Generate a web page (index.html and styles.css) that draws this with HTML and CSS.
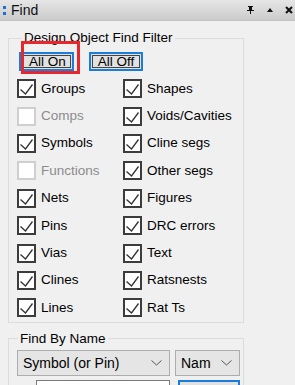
FILE: index.html
```html
<!DOCTYPE html>
<html lang="en">
<head>
  <meta charset="UTF-8" />
  <title>Find</title>
  <link rel="stylesheet" href="styles.css">
</head>
<body>
  <!-- Title bar -->
  <div class="titlebar">
    <span class="grip"><i></i><i></i></span>
    <span class="title">Find</span>
    <span class="tools">
      <svg width="9" height="8" viewBox="0 0 9 8"><path d="M2 0h5v1h-1v3h2v1H1V4h2V1H2z M4 5h1v3H4z" fill="#111"/></svg>
      <svg width="6" height="4" viewBox="0 0 6 4"><path d="M0 4L3 0L6 4z" fill="#111"/></svg>
      <svg width="8" height="8" viewBox="0 0 8 8"><path d="M1 1L7 7M7 1L1 7" stroke="#111" stroke-width="2"/></svg>
    </span>
  </div>

  <!-- Design Object Find Filter -->
  <fieldset class="group filter">
    <legend>Design Object Find Filter</legend>
    <div class="buttons">
      <button class="btn"><span>All On</span></button>
      <button class="btn"><span>All Off</span></button>
      <div class="mark"></div>
    </div>
    <div class="checks">
      <label class="check"><span class="box on"></span>Groups</label>
      <label class="check"><span class="box on"></span>Shapes</label>
      <label class="check off"><span class="box"></span>Comps</label>
      <label class="check"><span class="box on"></span>Voids/Cavities</label>
      <label class="check"><span class="box on"></span>Symbols</label>
      <label class="check"><span class="box on"></span>Cline segs</label>
      <label class="check off"><span class="box"></span>Functions</label>
      <label class="check"><span class="box on"></span>Other segs</label>
      <label class="check"><span class="box on"></span>Nets</label>
      <label class="check"><span class="box on"></span>Figures</label>
      <label class="check"><span class="box on"></span>Pins</label>
      <label class="check"><span class="box on"></span>DRC errors</label>
      <label class="check"><span class="box on"></span>Vias</label>
      <label class="check"><span class="box on"></span>Text</label>
      <label class="check"><span class="box on"></span>Clines</label>
      <label class="check"><span class="box on"></span>Ratsnests</label>
      <label class="check"><span class="box on"></span>Lines</label>
      <label class="check"><span class="box on"></span>Rat Ts</label>
    </div>
  </fieldset>

  <!-- Find By Name -->
  <fieldset class="group byname">
    <legend>Find By Name</legend>
    <div class="row">
      <div class="dropdown wide"><span>Symbol (or Pin)</span><svg width="11" height="6" viewBox="0 0 11 6"><path d="M0.5 0.5L5.5 5L10.5 0.5" fill="none" stroke="#555"/></svg></div>
      <div class="dropdown narrow"><span>Name</span><svg width="11" height="6" viewBox="0 0 11 6"><path d="M0.5 0.5L5.5 5L10.5 0.5" fill="none" stroke="#555"/></svg></div>
    </div>
    <div class="row second">
      <div class="textbox"></div>
      <div class="morebtn"></div>
    </div>
  </fieldset>
</body>
</html>
```

FILE: styles.css
```css
body {
  margin: 0;
  width: 295px;
  height: 385px;
  overflow: hidden;
  background-color: #f0f0f0;
  font-family: "Liberation Sans", Arial, sans-serif;
  font-size: 13px;
  color: #000;
}

.titlebar {
  height: 20px;
  display: flex;
  align-items: center;
  background: linear-gradient(#e6e6e6, #cbcbcb);
  border-bottom: 1px solid #c3c3c3;
}

.grip {
  display: flex;
  flex-direction: column;
  gap: 3px;
  margin: 0 5px 0 3px;
}

.grip i {
  display: block;
  width: 3px;
  height: 3px;
  background-color: #1d6fd8;
}

.title {
  font-size: 14px;
  color: #111;
  flex: 1;
}

.tools {
  display: flex;
  align-items: center;
  gap: 12px;
  margin-right: 2px;
}

.group {
  width: 236px;
  box-sizing: border-box;
  margin: 9px 0 0 8px;
  padding: 0 0 0 8px;
  border: 1px solid #dcdcdc;
}

.group legend {
  padding: 0 2px;
  line-height: 16px;
  font-size: 13.5px;
}

.filter legend {
  margin-left: 5px;
}

.byname {
  margin-top: 8px;
  padding-bottom: 20px;
}

.byname legend {
  margin-left: 1px;
}

.buttons {
  position: relative;
  display: flex;
  gap: 15px;
  margin: 6px 0 0 2px;
}

.btn {
  margin: 0;
  padding: 1px;
  border: 2px solid #1a7ddc;
  background-color: #e1e1e1;
  font-family: inherit;
  font-size: 13.5px;
  line-height: 11px;
  color: #000;
}

.btn span {
  display: block;
  padding: 0 5px;
  border: 1px solid #444;
}

.btn:first-child span {
  padding: 0 4px 0 6px;
}

.mark {
  position: absolute;
  left: 2px;
  top: -11px;
  width: 53px;
  height: 27px;
  border: 3px solid #e8262c;
}

.checks {
  display: grid;
  grid-template-columns: 106px 1fr;
  grid-auto-rows: 27.4px;
  align-items: center;
  margin-top: 4px;
}

.check {
  display: flex;
  align-items: center;
  gap: 5px;
  font-size: 13.5px;
  line-height: 16px;
}

.check.off {
  color: #8c8c8c;
}

.box {
  width: 15px;
  height: 15px;
  border: 2px solid #3c3c3c;
  background-color: #fff;
  flex: none;
}

.check.off .box {
  border-color: #cfcfcf;
}

.box.on {
  background-image: url("data:image/svg+xml,%3Csvg xmlns='http://www.w3.org/2000/svg' width='15' height='15' viewBox='0 0 15 15'%3E%3Cpath d='M1.5 8.5L6.5 13L13.5 3.5' fill='none' stroke='%23333' stroke-width='1.3'/%3E%3C/svg%3E");
}

.row {
  display: flex;
  gap: 5px;
  margin-top: 3px;
}

.dropdown {
  height: 26px;
  box-sizing: border-box;
  display: flex;
  align-items: center;
  justify-content: space-between;
  padding: 0 7px 0 5px;
  background-color: #e5e5e5;
  border: 1px solid #adadad;
  font-size: 14px;
  overflow: hidden;
}

.dropdown span {
  overflow: hidden;
  white-space: nowrap;
}

.wide {
  width: 153px;
}

.narrow {
  width: 65px;
}

.narrow span {
  width: 30px;
}

.second {
  margin-top: 4px;
  gap: 8px;
}

.textbox {
  margin-left: 19px;
  width: 132px;
  height: 20px;
  border: 1px solid #7a7a7a;
  background-color: #fff;
}

.morebtn {
  width: 58px;
  height: 20px;
  border: 2px solid #1a7ddc;
  background-color: #e1e1e1;
}
```
